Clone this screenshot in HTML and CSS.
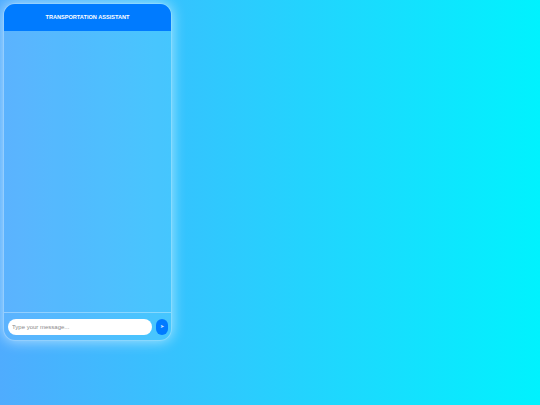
FILE: index.html
```html
<!DOCTYPE html>
<html>
<head>
<meta charset="utf-8">
<link rel="stylesheet" href="styles.css">
</head>
<body>
<div class="chat">
  <div class="chat-header">TRANSPORTATION ASSISTANT</div>
  <div class="chat-messages"></div>
  <div class="chat-input">
    <input class="msg" type="text" placeholder="Type your message...">
    <button class="send">&#10148;</button>
  </div>
</div>
</body>
</html>
```
FILE: styles.css
```css
html, body { margin: 0; padding: 0; }
body {
  width: 540px;
  height: 405px;
  background: linear-gradient(to right, #4facfe, #00f2fe);
  font-family: "Liberation Sans", Arial, sans-serif;
  padding: 3px;
  box-sizing: border-box;
}
.chat {
  width: 169px;
  height: 338px;
  border-radius: 12px;
  background: rgba(255,255,255,0.08);
  box-shadow: 0 0 14px rgba(255,255,255,0.6);
  border: 1px solid rgba(255,255,255,0.35);
  box-sizing: border-box;
  display: flex;
  flex-direction: column;
  overflow: hidden;
}
.chat-header {
  height: 28px;
  flex: none;
  background: #007bff;
  color: #fff;
  font-weight: bold;
  font-size: 5.6px;
  display: flex;
  align-items: center;
  justify-content: center;
  margin: -1px -1px 0 -1px;
}
.chat-messages { flex: 1; }
.chat-input {
  flex: none;
  height: 28px;
  border-top: 1px solid rgba(255,255,255,0.35);
  display: flex;
  align-items: center;
  gap: 4px;
  padding: 0 3px 0 4px;
  box-sizing: border-box;
}
.msg {
  flex: 1;
  height: 16px;
  border: none;
  border-radius: 8px;
  background: #fff;
  padding: 0 4px;
  font-family: "Liberation Sans", Arial, sans-serif;
  font-size: 6px;
  outline: none;
  box-sizing: border-box;
}
.msg::placeholder { color: #8a8a8a; }
.send {
  width: 12px;
  height: 16px;
  border: none;
  border-radius: 6px;
  background: #007bff;
  color: #cfe3ff;
  font-size: 4.5px;
  padding: 0;
  display: flex;
  align-items: center;
  justify-content: center;
}
```
